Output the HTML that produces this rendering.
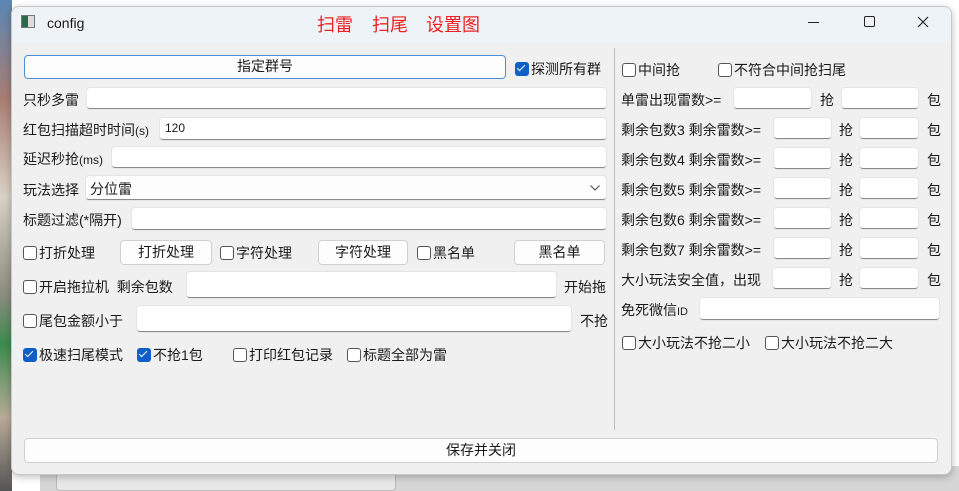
<!DOCTYPE html><html><head><meta charset="utf-8"><style>
*{box-sizing:border-box;margin:0;padding:0}
body{width:959px;height:491px;overflow:hidden;position:relative;background:#fff;font-family:"Liberation Sans","Noto Sans CJK SC",sans-serif;font-size:14px;color:#1a1a1a}
.a{position:absolute;white-space:nowrap}
.in{position:absolute;background:#fff;border-bottom:1px solid #8a8a8a;border-radius:3px;box-shadow:0 0 0 1px #e5e5e5}
.btn{position:absolute;background:#fdfdfd;border:1px solid #d0d0d0;border-radius:4px;text-align:center;font-size:14px}
.cb{display:inline-block;width:14px;height:14px;border:1px solid #555;border-radius:3px;background:#fff;vertical-align:-2px;margin-right:2px}
.ck{display:inline-block;width:14px;height:14px;border-radius:3px;background:#0f5fc6;vertical-align:-2px;margin-right:2px;position:relative}
.ck:after{content:"";position:absolute;left:4px;top:1px;width:3px;height:7px;border:solid #fff;border-width:0 1.5px 1.5px 0;transform:rotate(45deg)}
</style></head><body>
<div class="a" style="left:0;top:0;width:12px;height:491px;background:linear-gradient(#5b87b5,#a97d73 20%,#d9d2c6 40%,#8c8c7f 60%,#3d8b4f 70%,#b9ab98 85%,#555)"></div>
<div class="a" style="left:40px;top:466px;width:919px;height:25px;background:#d6d6d6"></div>
<div class="a" style="left:56px;top:468px;width:340px;height:23px;background:#e8e8e8;border:1px solid #bbb;border-radius:4px"></div>
<div class="a" style="left:11px;top:6px;width:941px;height:469px;background:#f0f0f0;border:1px solid #c8c8c8;border-radius:8px;box-shadow:0 2px 8px rgba(0,0,0,.25);overflow:hidden">
<div class="a" style="left:0;top:0;width:942px;height:36px;background:#eef3f8"></div>
</div>
<div class="a" style="left:21px;top:15px;width:14px;height:13px;border:1px solid #777;background:linear-gradient(90deg,#2a6a4a 50%,#ddd 50%)"></div>
<div class="a" style="left:47px;top:15px;font-size:14px">config</div>
<div class="a" style="left:317px;top:11px;font-size:18px;color:#f02020">扫雷</div>
<div class="a" style="left:372px;top:11px;font-size:18px;color:#f02020">扫尾</div>
<div class="a" style="left:426px;top:11px;font-size:18px;color:#f02020">设置图</div>
<div class="a" style="left:808px;top:22px;width:11px;height:1px;background:#222"></div>
<div class="a" style="left:864px;top:16px;width:11px;height:11px;border:1px solid #222;border-radius:2px"></div>
<svg class="a" style="left:917px;top:16px" width="12" height="12"><path d="M1 1L11 11M11 1L1 11" stroke="#222" stroke-width="1.2"/></svg>

<div class="btn" style="left:24px;top:55px;width:482px;height:24px;border:1.5px solid #4a8ed8;line-height:21px">指定群号</div>
<div class="a" style="left:515px;top:59px"><span class="ck"></span>探测所有群</div>
<div class="a" style="left:23px;top:90px">只秒多雷</div><div class="in" style="left:87px;top:88px;width:519px;height:21px"></div>
<div class="a" style="left:23px;top:120px">红包扫描超时时间<span style="font-size:12px">(s)</span></div><div class="in" style="left:160px;top:118px;width:446px;height:22px;padding:3px 5px;font-size:12px">120</div>
<div class="a" style="left:23px;top:149px">延迟秒抢<span style="font-size:12px">(ms)</span></div><div class="in" style="left:112px;top:147px;width:494px;height:21px"></div>
<div class="a" style="left:23px;top:180px">玩法选择</div><div class="in" style="left:86px;top:176px;width:520px;height:24px;padding:3px 4px;background:#fdfdfd">分位雷<svg style="position:absolute;right:6px;top:9px" width="10" height="6"><path d="M0.5 0.5L5 5L9.5 0.5" fill="none" stroke="#444"/></svg></div>
<div class="a" style="left:23px;top:210px">标题过滤(*隔开)</div><div class="in" style="left:132px;top:208px;width:474px;height:22px"></div>
<div class="a" style="left:23px;top:243px"><span class="cb"></span>打折处理</div>
<div class="btn" style="left:120px;top:240px;width:92px;height:25px;line-height:23px">打折处理</div>
<div class="a" style="left:220px;top:243px"><span class="cb"></span>字符处理</div>
<div class="btn" style="left:318px;top:240px;width:90px;height:25px;line-height:23px">字符处理</div>
<div class="a" style="left:417px;top:243px"><span class="cb"></span>黑名单</div>
<div class="btn" style="left:514px;top:240px;width:91px;height:25px;line-height:23px">黑名单</div>
<div class="a" style="left:23px;top:277px"><span class="cb"></span>开启拖拉机&nbsp; 剩余包数</div><div class="in" style="left:187px;top:272px;width:369px;height:26px"></div>
<div class="a" style="left:564px;top:277px">开始拖</div>
<div class="a" style="left:23px;top:311px"><span class="cb"></span>尾包金额小于</div><div class="in" style="left:137px;top:306px;width:434px;height:26px"></div>
<div class="a" style="left:580px;top:311px">不抢</div>
<div class="a" style="left:23px;top:345px"><span class="ck"></span>极速扫尾模式</div>
<div class="a" style="left:137px;top:345px"><span class="ck"></span>不抢1包</div>
<div class="a" style="left:233px;top:345px"><span class="cb"></span>打印红包记录</div>
<div class="a" style="left:347px;top:345px"><span class="cb"></span>标题全部为雷</div>
<div class="a" style="left:614px;top:48px;width:1px;height:382px;background:#bbb"></div>
<div class="btn" style="left:24px;top:438px;width:914px;height:25px;line-height:23px">保存并关闭</div>

<div class="a" style="left:622px;top:60px"><span class="cb"></span>中间抢</div>
<div class="a" style="left:718px;top:60px"><span class="cb"></span>不符合中间抢扫尾</div>
<div class="a" style="left:621px;top:90px">单雷出现雷数&gt;=</div><div class="in" style="left:734px;top:88px;width:77px;height:21px"></div><div class="a" style="left:820px;top:90px">抢</div><div class="in" style="left:842px;top:88px;width:76px;height:21px"></div><div class="a" style="left:927px;top:90px">包</div>
<div class="a" style="left:621px;top:120px">剩余包数3 剩余雷数&gt;=</div><div class="in" style="left:774px;top:118px;width:57px;height:21px"></div><div class="a" style="left:839px;top:120px">抢</div><div class="in" style="left:860px;top:118px;width:58px;height:21px"></div><div class="a" style="left:927px;top:120px">包</div>
<div class="a" style="left:621px;top:150px">剩余包数4 剩余雷数&gt;=</div><div class="in" style="left:774px;top:148px;width:57px;height:21px"></div><div class="a" style="left:839px;top:150px">抢</div><div class="in" style="left:860px;top:148px;width:58px;height:21px"></div><div class="a" style="left:927px;top:150px">包</div>
<div class="a" style="left:621px;top:180px">剩余包数5 剩余雷数&gt;=</div><div class="in" style="left:774px;top:178px;width:57px;height:21px"></div><div class="a" style="left:839px;top:180px">抢</div><div class="in" style="left:860px;top:178px;width:58px;height:21px"></div><div class="a" style="left:927px;top:180px">包</div>
<div class="a" style="left:621px;top:210px">剩余包数6 剩余雷数&gt;=</div><div class="in" style="left:774px;top:208px;width:57px;height:21px"></div><div class="a" style="left:839px;top:210px">抢</div><div class="in" style="left:860px;top:208px;width:58px;height:21px"></div><div class="a" style="left:927px;top:210px">包</div>
<div class="a" style="left:621px;top:240px">剩余包数7 剩余雷数&gt;=</div><div class="in" style="left:774px;top:238px;width:57px;height:21px"></div><div class="a" style="left:839px;top:240px">抢</div><div class="in" style="left:860px;top:238px;width:58px;height:21px"></div><div class="a" style="left:927px;top:240px">包</div>
<div class="a" style="left:621px;top:270px">大小玩法安全值，出现</div><div class="in" style="left:773px;top:268px;width:58px;height:21px"></div><div class="a" style="left:839px;top:270px">抢</div><div class="in" style="left:860px;top:268px;width:58px;height:21px"></div><div class="a" style="left:927px;top:270px">包</div>
<div class="a" style="left:621px;top:300px">免死微信<span style="font-size:11px">ID</span></div><div class="in" style="left:700px;top:298px;width:239px;height:22px"></div>
<div class="a" style="left:622px;top:333px"><span class="cb"></span>大小玩法不抢二小</div>
<div class="a" style="left:765px;top:333px"><span class="cb"></span>大小玩法不抢二大</div>
</body></html>
